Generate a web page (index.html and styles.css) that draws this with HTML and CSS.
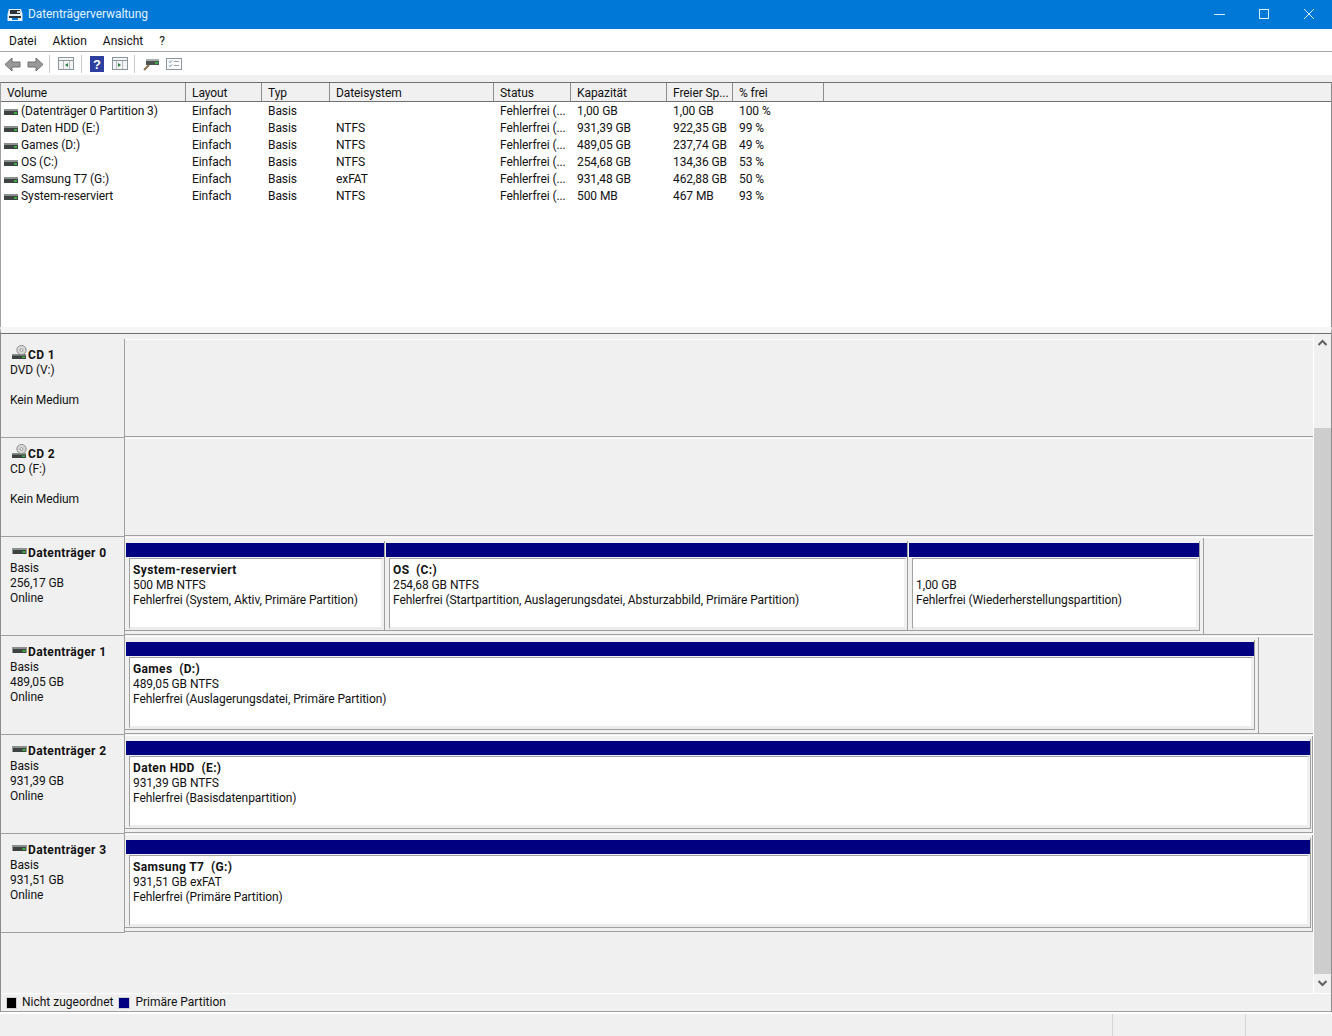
FILE: index.html
```html
<!DOCTYPE html>
<html lang="de">
<head>
<meta charset="utf-8">
<title>Datenträgerverwaltung</title>
<link rel="stylesheet" href="styles.css">
</head>
<body>
<svg class="defs" width="0" height="0">
  <defs>
    <symbol id="hdd" viewBox="0 0 14 6">
      <rect x="0" y="0" width="14" height="6" fill="#3c4340"/>
      <rect x="0" y="0" width="14" height="2" fill="#8a908d"/>
      <rect x="10" y="3" width="3" height="2" fill="#3fae49"/>
    </symbol>
    <symbol id="cd" viewBox="0 0 16 15">
      <circle cx="9.500" cy="5" r="4.600" fill="#d8d8d8" stroke="#8d8d8d"/>
      <circle cx="9.500" cy="5" r="1.400" fill="#fff" stroke="#777" stroke-width=".7"/>
      <rect x="0" y="9" width="14" height="5" fill="#3c4340"/>
      <rect x="0" y="9" width="14" height="1.600" fill="#8a908d"/>
      <rect x="10" y="11.500" width="3" height="1.500" fill="#3fae49"/>
    </symbol>
  </defs>
</svg>
<header class="titlebar">
  <svg class="appicon" width="16" height="14" viewBox="0 0 16 14">
    <path d="M2 1h12l1.500 5v7H.5V6z" fill="#e8eef2"/>
    <rect x="3" y="2" width="10" height="4" fill="#2c3338"/>
    <rect x="10" y="3" width="4" height="2" fill="#cfd6da"/>
    <rect x="2" y="8" width="12" height="2" fill="#2c3338"/>
    <rect x="5" y="10" width="6" height="2" fill="#0078d7"/>
  </svg>
  <span class="titletext">Datenträgerverwaltung</span>
  <div class="winbtns">
    <svg class="winbtn" width="46" height="28" viewBox="0 0 46 28"><path d="M20 13.500h11" stroke="#d6f0ff" fill="none"/></svg>
    <svg class="winbtn" width="46" height="28" viewBox="0 0 46 28"><rect x="19.500" y="8.500" width="9" height="9" stroke="#d6f0ff" fill="none"/></svg>
    <svg class="winbtn" width="46" height="28" viewBox="0 0 46 28"><path d="M18 8l10 10M28 8L18 18" stroke="#d6f0ff" fill="none"/></svg>
  </div>
</header>
<nav class="menubar">
  <span>Datei</span><span>Aktion</span><span>Ansicht</span><span>?</span>
</nav>
<div class="toolbar">
  <svg width="17" height="16" viewBox="0 0 17 16"><path d="M8 2v4h8v5H8v4L1 8.500z" fill="#9a9a9a" stroke="#6f6f6f"/></svg>
  <svg class="ml6" width="17" height="16" viewBox="0 0 17 16"><path d="M9 2v4H1v5h8v4l7-6.500z" fill="#9a9a9a" stroke="#6f6f6f"/></svg>
  <i class="sep ml5"></i>
  <svg class="ml8" width="16" height="13" viewBox="0 0 16 13"><rect x=".5" y=".5" width="15" height="12" fill="#f4f4f4" stroke="#8b979c"/><path d="M1 3.500h14" stroke="#8b979c"/><path d="M5.500 4v8M11.500 4v8" stroke="#b5bcc0"/><path d="M10 6v4L7 8z" fill="#2f7f44"/></svg>
  <i class="sep ml7"></i>
  <svg class="ml8" width="14" height="16" viewBox="0 0 14 16"><rect width="14" height="16" fill="#2e3f9e"/><text x="7" y="13" class="qmark">?</text></svg>
  <svg class="ml8" width="16" height="13" viewBox="0 0 16 13"><rect x=".5" y=".5" width="15" height="12" fill="#f4f4f4" stroke="#8b979c"/><path d="M4.500 4v8M10.500 4v8" stroke="#b5bcc0"/><path d="M1 3.500h14" stroke="#8b979c"/><path d="M6 6v4l3-2z" fill="#2f7f44"/></svg>
  <i class="sep ml6"></i>
  <svg class="ml8" width="16" height="15" viewBox="0 0 16 15"><rect x="3" y="3" width="13" height="6" fill="#4b5350"/><rect x="3" y="3" width="13" height="2" fill="#a9b0ad"/><rect x="12" y="6" width="3" height="2" fill="#3fae49"/><path d="M1 14l5-5" stroke="#8a6f4a" stroke-width="2"/></svg>
  <svg class="ml7" width="16" height="12" viewBox="0 0 16 12"><rect x=".5" y=".5" width="15" height="11" fill="#fbfbfb" stroke="#8b979c"/><path d="M3 3.500l1 1 2-2M3 7.500l1 1 2-2" stroke="#4a7fb5" fill="none"/><path d="M8 3.500h5M8 7.500h5" stroke="#9aa3a8"/></svg>
</div>
<div class="toolgap"></div>

<section class="listview">
  <div class="row head">
    <span class="c1">Volume</span><span class="c2">Layout</span><span class="c3">Typ</span><span class="c4">Dateisystem</span><span class="c5">Status</span><span class="c6">Kapazität</span><span class="c7">Freier Sp...</span><span class="c8">% frei</span><span class="c9"></span>
  </div>
  <div class="rows">
    <div class="row"><span class="c1"><svg class="hdd"><use href="#hdd"/></svg>(Datenträger 0 Partition 3)</span><span class="c2">Einfach</span><span class="c3">Basis</span><span class="c4"></span><span class="c5">Fehlerfrei (...</span><span class="c6">1,00 GB</span><span class="c7">1,00 GB</span><span class="c8">100 %</span></div>
    <div class="row"><span class="c1"><svg class="hdd"><use href="#hdd"/></svg>Daten HDD (E:)</span><span class="c2">Einfach</span><span class="c3">Basis</span><span class="c4">NTFS</span><span class="c5">Fehlerfrei (...</span><span class="c6">931,39 GB</span><span class="c7">922,35 GB</span><span class="c8">99 %</span></div>
    <div class="row"><span class="c1"><svg class="hdd"><use href="#hdd"/></svg>Games (D:)</span><span class="c2">Einfach</span><span class="c3">Basis</span><span class="c4">NTFS</span><span class="c5">Fehlerfrei (...</span><span class="c6">489,05 GB</span><span class="c7">237,74 GB</span><span class="c8">49 %</span></div>
    <div class="row"><span class="c1"><svg class="hdd"><use href="#hdd"/></svg>OS (C:)</span><span class="c2">Einfach</span><span class="c3">Basis</span><span class="c4">NTFS</span><span class="c5">Fehlerfrei (...</span><span class="c6">254,68 GB</span><span class="c7">134,36 GB</span><span class="c8">53 %</span></div>
    <div class="row"><span class="c1"><svg class="hdd"><use href="#hdd"/></svg>Samsung T7 (G:)</span><span class="c2">Einfach</span><span class="c3">Basis</span><span class="c4">exFAT</span><span class="c5">Fehlerfrei (...</span><span class="c6">931,48 GB</span><span class="c7">462,88 GB</span><span class="c8">50 %</span></div>
    <div class="row"><span class="c1"><svg class="hdd"><use href="#hdd"/></svg>System-reserviert</span><span class="c2">Einfach</span><span class="c3">Basis</span><span class="c4">NTFS</span><span class="c5">Fehlerfrei (...</span><span class="c6">500 MB</span><span class="c7">467 MB</span><span class="c8">93 %</span></div>
  </div>
</section>

<section class="lower">
  <div class="diskpane">
    <div class="disks">
      <div class="disk">
        <div class="label"><b class="lname"><svg class="cdi"><use href="#cd"/></svg>CD 1</b><span>DVD (V:)</span><span>&nbsp;</span><span>Kein Medium</span></div>
        <div class="area"></div>
      </div>
      <div class="disk">
        <div class="label"><b class="lname"><svg class="cdi"><use href="#cd"/></svg>CD 2</b><span>CD (F:)</span><span>&nbsp;</span><span>Kein Medium</span></div>
        <div class="area"></div>
      </div>
      <div class="disk">
        <div class="label"><b class="lname"><svg class="hdd2"><use href="#hdd"/></svg>Datenträger 0</b><span>Basis</span><span>256,17 GB</span><span>Online</span></div>
        <div class="area">
          <div class="frame w0"><div class="parts">
            <div class="part p1"><div class="bar"></div><div class="box"><b>System-reserviert</b><span>500 MB NTFS</span><span>Fehlerfrei (System, Aktiv, Primäre Partition)</span></div></div>
            <div class="part p2"><div class="bar"></div><div class="box"><b>OS&nbsp; (C:)</b><span>254,68 GB NTFS</span><span>Fehlerfrei (Startpartition, Auslagerungsdatei, Absturzabbild, Primäre Partition)</span></div></div>
            <div class="part p3"><div class="bar"></div><div class="box"><b>&nbsp;</b><span>1,00 GB</span><span>Fehlerfrei (Wiederherstellungspartition)</span></div></div>
          </div></div>
        </div>
      </div>
      <div class="disk">
        <div class="label"><b class="lname"><svg class="hdd2"><use href="#hdd"/></svg>Datenträger 1</b><span>Basis</span><span>489,05 GB</span><span>Online</span></div>
        <div class="area">
          <div class="frame w1"><div class="parts">
            <div class="part pf"><div class="bar"></div><div class="box"><b>Games&nbsp; (D:)</b><span>489,05 GB NTFS</span><span>Fehlerfrei (Auslagerungsdatei, Primäre Partition)</span></div></div>
          </div></div>
        </div>
      </div>
      <div class="disk">
        <div class="label"><b class="lname"><svg class="hdd2"><use href="#hdd"/></svg>Datenträger 2</b><span>Basis</span><span>931,39 GB</span><span>Online</span></div>
        <div class="area">
          <div class="frame w2"><div class="parts">
            <div class="part pf"><div class="bar"></div><div class="box"><b>Daten HDD&nbsp; (E:)</b><span>931,39 GB NTFS</span><span>Fehlerfrei (Basisdatenpartition)</span></div></div>
          </div></div>
        </div>
      </div>
      <div class="disk">
        <div class="label"><b class="lname"><svg class="hdd2"><use href="#hdd"/></svg>Datenträger 3</b><span>Basis</span><span>931,51 GB</span><span>Online</span></div>
        <div class="area">
          <div class="frame w2"><div class="parts">
            <div class="part pf"><div class="bar"></div><div class="box"><b>Samsung T7&nbsp; (G:)</b><span>931,51 GB exFAT</span><span>Fehlerfrei (Primäre Partition)</span></div></div>
          </div></div>
        </div>
      </div>
    </div>
    <div class="scrollbar">
      <svg width="17" height="14" viewBox="0 0 17 14"><path d="M4.500 9l4-4 4 4" stroke="#606060" stroke-width="2" fill="none"/></svg>
      <div class="track"><div class="thumb"></div></div>
      <svg width="17" height="14" viewBox="0 0 17 14"><path d="M4.500 5l4 4 4-4" stroke="#606060" stroke-width="2" fill="none"/></svg>
    </div>
  </div>
  <div class="legend">
    <i class="swatch black"></i><span>Nicht zugeordnet</span><i class="swatch navy"></i><span>Primäre Partition</span>
  </div>
</section>
<footer class="status">
  <div class="s1"></div><div class="s2"></div><div class="s3"></div>
</footer>
</body>
</html>
```
FILE: styles.css
```css
* { box-sizing: border-box; }
html, body { margin: 0; height: 1036px; overflow: hidden; }
body {
  display: flex;
  flex-direction: column;
  background: #f0f0f0;
  color: #111;
  font: 12px/15px Roboto, "Noto Sans", sans-serif;
  letter-spacing: -0.08px;
}
b { letter-spacing: 0.36px; }
.defs { display: block; height: 0; }
.titlebar {
  height: 29px;
  flex: none;
  background: #0078d7;
  color: #e3f3ff;
  display: flex;
  align-items: center;
  padding-left: 7px;
}
.appicon { margin-right: 5px; }
.titletext { flex: 1; }
.winbtns { display: flex; }
.winbtn { display: block; }
.menubar {
  height: 23px;
  flex: none;
  background: #fff;
  border-bottom: 1px solid #a8a8a8;
  display: flex;
  align-items: center;
  gap: 16px;
  padding: 2px 0 0 9px;
  letter-spacing: 0;
}
.toolbar {
  height: 23px;
  flex: none;
  background: #fff;
  display: flex;
  align-items: center;
  padding-left: 4px;
}
.ml5 { margin-left: 5px; }
.ml6 { margin-left: 6px; }
.ml7 { margin-left: 7px; }
.ml8 { margin-left: 8px; }
.sep { width: 1px; height: 18px; background: #c8c8c8; }
.qmark { font: bold 13px "Liberation Sans", sans-serif; fill: #fff; text-anchor: middle; }
.toolgap { height: 7px; flex: none; background: #f0f0f0; }

.listview {
  height: 245px;
  flex: none;
  background: #fff;
  border-top: 1px solid #707070;
  border-right: 1px solid #8c8c8c;
  border-left: 1px solid #a0a0a0;
  display: flex;
  flex-direction: column;
}
.row { display: flex; height: 17px; align-items: center; white-space: nowrap; }
.row > span { display: flex; align-items: center; padding-left: 6px; overflow: hidden; flex: none; }
.head {
  height: 19px;
  background: #f0f0f0;
  border-bottom: 1px solid #707070;
}
.head > span { height: 18px; border-right: 1px solid #8c8c8c; padding-top: 3px; }
.rows { padding-top: 1px; }
.c1 { width: 185px; }
.c2 { width: 76px; }
.c3 { width: 68px; }
.c4 { width: 164px; }
.c5 { width: 77px; }
.c6 { width: 96px; }
.c7 { width: 66px; }
.c8 { width: 91px; }
.head > .c9 { flex: 1; border-right: 0; }
.rows .c1 { padding-left: 3px; }
.hdd { width: 14px; height: 6px; margin-right: 3px; }

.lower {
  flex: none;
  height: 685px;
  background: #f0f0f0;
  border-top: 6px solid #f5f5f5;
  border-left: 1px solid #8c8c8c;
  border-right: 1px solid #8c8c8c;
  display: flex;
  flex-direction: column;
}
.diskpane { flex: none; height: 660px; display: flex; border-top: 1px solid #707070; }
.disks { flex: 1; min-width: 0; padding-top: 5px; }
.disk { height: 99px; display: flex; align-items: flex-start; }
.label {
  width: 124px;
  height: 99px;
  flex: none;
  padding: 9px 0 0 9px;
  display: flex;
  flex-direction: column;
  border-right: 1px solid #a0a0a0;
  border-bottom: 1px solid #a0a0a0;
}
.lname { display: flex; align-items: flex-end; }
.cdi { width: 16px; height: 15px; margin: -5px 0 0 2px; position: relative; top: -3px; }
.hdd2 { width: 15px; height: 6px; margin: 0 1px 7px 2px; }
.area {
  flex: 1;
  min-width: 0;
  height: 98px;
  background: #f0f0f0;
  border-top: 1px solid #fff;
  border-bottom: 1px solid #a0a0a0;
}
.frame {
  height: 96px;
  padding: 3px 3px 3px 0;
  border-right: 1px solid #a0a0a0;
  display: flex;
}
.w0 { width: 1079px; }
.w1 { width: 1134px; }
.w2 { width: 100%; padding-right: 1px; }
.parts {
  flex: 1;
  display: flex;
  min-width: 0;
  border-right: 1px solid #a0a0a0;
  border-bottom: 1px solid #a0a0a0;
}
.part {
  display: flex;
  flex-direction: column;
  padding: 2px 0 0 1px;
  border-right: 1px solid #a0a0a0;
}
.p1 { width: 260px; }
.p2 { width: 523px; }
.p3 { width: 291px; border-right: 0; }
.pf { flex: 1; border-right: 0; }
.bar { height: 14px; flex: none; background: #000080; }
.box {
  flex: 1;
  margin: 1px 0 0 3px;
  background: #fff;
  border-top: 1px solid #a0a0a0;
  border-left: 1px solid #a0a0a0;
  border-right: 3px solid #f0f0f0;
  border-bottom: 3px solid #ececec;
  padding: 4px 0 0 3px;
  display: flex;
  flex-direction: column;
  white-space: nowrap;
  overflow: hidden;
}
.scrollbar {
  width: 18px;
  flex: none;
  border-left: 1px solid #fff;
  background: #f0f0f0;
  display: flex;
  flex-direction: column;
  padding: 2px 0 3px;
}
.scrollbar svg { display: block; flex: none; }
.track { flex: 1; padding: 78px 0 2px; }
.thumb { height: 100%; background: #cdcdcd; }
.legend {
  height: 19px;
  flex: none;
  display: flex;
  align-items: center;
  gap: 5px;
  padding-left: 5px;
  border-top: 1px solid #fff;
  border-bottom: 1px solid #a0a0a0;
  letter-spacing: 0;
}
.swatch { width: 12px; height: 12px; border: 1px solid #d0d0d0; flex: none; }
.black { background: #000; width: 11px; }
.navy { background: #000080; }
.status {
  flex: 1;
  display: flex;
  background: #f0f0f0;
  border-top: 2px solid #fff;
}
.s1 { width: 1112px; }
.s2 { width: 133px; border-left: 1px solid #d4d4d4; }
.s3 { flex: 1; border-left: 1px solid #d4d4d4; }
```
